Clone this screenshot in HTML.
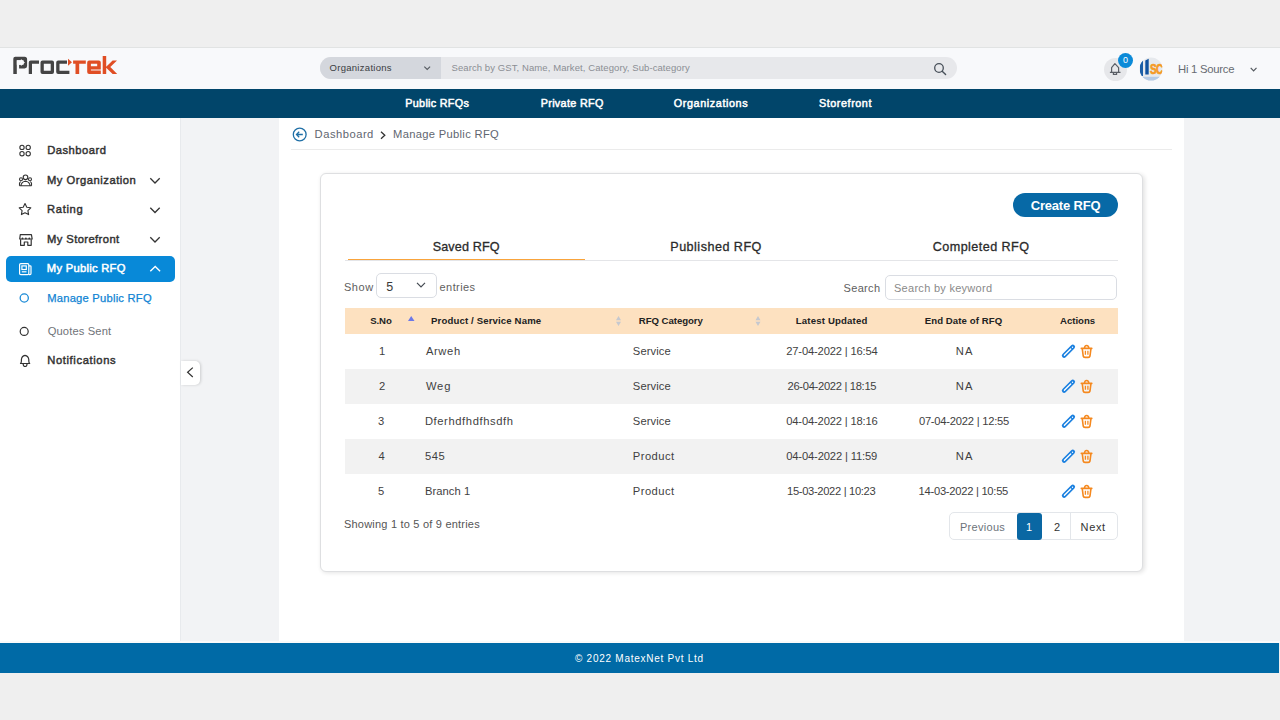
<!DOCTYPE html>
<html><head><meta charset="utf-8"><style>
html,body{margin:0;padding:0;width:1280px;height:720px;overflow:hidden;background:#efefef;position:relative}
.t{position:absolute;font-family:'Liberation Sans', sans-serif;line-height:40px;white-space:nowrap}
.a{position:absolute}
svg{position:absolute;overflow:visible}
</style></head><body>
<!-- top band / header -->
<div class="a" style="left:0;top:47px;width:1280px;height:1px;background:#e1e3e3"></div>
<div class="a" style="left:0;top:48px;width:1280px;height:41px;background:#f8f9fb"></div>
<!-- logo -->
<svg style="left:0;top:0" width="130" height="90" viewBox="0 0 130 90">
  <g fill="#444">
    <path d="M13.3 74 V58.7 Q13.3 56.7 15.3 56.7 H24.6 Q27.1 56.7 27.1 59.2 V66 Q27.1 68.4 24.6 68.4 H19.1 V64.7 H23.6 V60.2 H16.8 V74 Z"/>
    <path d="M16.8 60.3 H20.9 V58.9 L24.9 62.5 L20.9 66.1 V64.7 H19.1 L16.8 64.7 Z" fill="#f8f9fb"/>
    <path d="M28.75 74 V62.4 Q28.75 60.4 30.75 60.4 H39 V63.7 H32 V74 Z"/>
    <path d="M42.5 60.4 H52 Q54 60.4 54 62.4 V72 Q54 74 52 74 H42.5 Q40.5 74 40.5 72 V62.4 Q40.5 60.4 42.5 60.4 Z M43.8 63.7 V70.7 H50.7 V63.7 Z"/>
    <path d="M58.2 60.4 H67 V63.7 H59.5 V70.7 H69.4 V74 H58.2 Q56.2 74 56.2 72 V62.4 Q56.2 60.4 58.2 60.4 Z"/>
  </g>
  <g fill="#e04e24">
    <path d="M68 58.8 L72 62.3 L68 65.8 Z"/>
    <path d="M73.1 60.4 H85.8 V63.7 H79.2 V74 H75.5 V63.7 H73.1 Z"/>
    <path d="M89.2 60.4 H98.8 Q100.8 60.4 100.8 62.4 V69.6 H90.9 V70.6 H100.8 V74 H89.2 Q87.2 74 87.2 72 V62.4 Q87.2 60.4 89.2 60.4 Z M90.9 63.7 V66.2 H97.2 V63.7 Z"/>
    <path d="M102.7 56 H106.2 V66.8 L112.6 60.4 H117 L110.3 67 L117.2 74 H112.6 L106.2 67.8 V74 H102.7 Z"/>
  </g>
</svg>
<!-- search -->
<div class="a" style="left:320px;top:57px;width:637px;height:22px;border-radius:11px;background:#e7e8eb;overflow:hidden">
  <div class="a" style="left:0;top:0;width:120.5px;height:22px;background:#d4d7dd"></div>
</div>
<svg style="left:0;top:0" width="1" height="1">
  <path d="M424.3 66.6 L427.2 69.5 L430.1 66.6" fill="none" stroke="#555a60" stroke-width="1.1"/>
  <circle cx="939" cy="68" r="4.3" fill="none" stroke="#48505a" stroke-width="1.3"/>
  <path d="M942.2 71.2 L945.6 74.6" stroke="#48505a" stroke-width="1.4" stroke-linecap="round"/>
</svg>
<!-- bell / badge / avatar -->
<div class="a" style="left:1104px;top:57.5px;width:23px;height:23px;border-radius:50%;background:#e6e7ea"></div>
<svg style="left:0;top:0" width="1" height="1">
  <path d="M1109.9 72.4 H1120.5 M1111.6 72.4 V67.6 L1114.9 63.6 L1118.6 67.6 V72.4 M1113.4 72.6 V74.4 H1116.6 V72.6" fill="none" stroke="#5a5e66" stroke-width="1.2" stroke-linejoin="round"/>
</svg>
<div class="a" style="left:1118px;top:53px;width:15px;height:15px;border-radius:50%;background:#0b8ad8"></div>
<div class="a" style="left:1118px;top:53px;width:15px;height:15px;color:#fff;font-family:'Liberation Sans';font-size:9px;line-height:14px;text-align:center">0</div>
<svg style="left:0;top:0" width="1" height="1">
  <defs><clipPath id="av"><circle cx="1151" cy="69" r="11.5"/></clipPath></defs>
  <g clip-path="url(#av)">
    <rect x="1139" y="57" width="24" height="24" fill="#e6e9ed"/>
    <path d="M1140 62 L1143 60 L1143 76 L1140 76 Z" fill="#1b5fa8"/>
    <path d="M1145.3 60.5 L1148.7 58.8 L1148.7 74.5 L1145.3 74.5 Z" fill="#0f52a0"/>
    <text x="1150" y="73.8" style="font-family:'Liberation Sans';font-weight:bold;font-size:14px" fill="#f59a25" stroke="#f59a25" stroke-width="0.7" letter-spacing="-1" transform="translate(1150 73.8) scale(0.72 1.07) translate(-1150 -73.8)">SC</text>
    <rect x="1139" y="76.8" width="24" height="4.5" fill="#b5cbe6"/>
  </g>
</svg>
<svg style="left:0;top:0" width="1" height="1">
  <path d="M1250.7 67.8 L1253.6 70.8 L1256.5 67.8" fill="none" stroke="#555a60" stroke-width="1.2"/>
</svg>
<!-- nav -->
<div class="a" style="left:0;top:89px;width:1280px;height:29px;background:#01456a"></div>
<!-- columns -->
<div class="a" style="left:0;top:118px;width:180px;height:525px;background:#fff"></div>
<div class="a" style="left:180px;top:118px;width:99px;height:525px;background:#f2f3f5;border-left:1px solid #e8eaed;box-sizing:border-box"></div>
<div class="a" style="left:279px;top:118px;width:905px;height:525px;background:#fff"></div>
<div class="a" style="left:1184px;top:118px;width:96px;height:525px;background:#f2f3f5"></div>
<!-- sidebar active -->
<div class="a" style="left:6px;top:255.5px;width:169px;height:26.8px;border-radius:5px;background:#0889d8"></div>
<svg style="left:0;top:0" width="1" height="1" fill="none" stroke="#333" stroke-width="1.1">
  <!-- dashboard -->
  <circle cx="22" cy="147.4" r="2.15"/><circle cx="28.2" cy="147.4" r="2.15"/>
  <circle cx="22" cy="153.7" r="2.15"/><circle cx="28.2" cy="153.7" r="2.15"/>
  <!-- organization -->
  <circle cx="25.5" cy="177.3" r="2.3"/>
  <circle cx="21" cy="179.3" r="1.5"/><circle cx="30" cy="179.3" r="1.5"/>
  <path d="M19.5 185.8 H31.5 M20.8 185.8 Q21.5 181.5 25.5 181.2 Q29.5 181.5 30.2 185.8 M19.5 185.8 V183.2 Q19.6 182 21 181.7 M31.5 185.8 V183.2 Q31.4 182 30 181.7"/>
  <!-- star -->
  <path d="M25 203.6 L26.8 207.3 L30.8 207.8 L27.9 210.6 L28.6 214.6 L25 212.7 L21.4 214.6 L22.1 210.6 L19.2 207.8 L23.2 207.3 Z" stroke-linejoin="round"/>
  <!-- storefront -->
  <path d="M19.7 239 L20.3 234.6 H31.4 L32.2 239 Z" stroke-width="1.2" stroke-linejoin="round"/>
  <circle cx="22.5" cy="238.4" r="0.9" fill="#333" stroke="none"/><circle cx="25.9" cy="238.4" r="0.9" fill="#333" stroke="none"/><circle cx="29.3" cy="238.4" r="0.9" fill="#333" stroke="none"/>
  <path d="M20.6 239.2 V245.3 H24.3 V242 H27.8 V245.3 H31.2 V239.2" stroke-width="1.2" stroke-linejoin="round"/>
  <!-- chevrons -->
  <path d="M150.3 178.3 L155 183 L159.7 178.3" stroke-width="1.3"/>
  <path d="M150.3 207.8 L155 212.5 L159.7 207.8" stroke-width="1.3"/>
  <path d="M150.3 237.3 L155 242 L159.7 237.3" stroke-width="1.3"/>
  <!-- quotes sent circle -->
  <circle cx="24.2" cy="331.4" r="4" stroke-width="1.2"/>
  <!-- bell -->
  <path d="M20.5 363.5 Q21.4 362.9 21.4 361 V359.6 Q21.7 356 25 355.4 Q28.4 356 28.8 359.6 V361 Q28.8 362.9 29.7 363.5 Z" stroke-width="1.2" stroke-linejoin="round"/>
  <path d="M23.1 363.7 Q23.3 366.5 25.1 366.5 Q26.9 366.5 27.1 363.7" stroke-width="1.2"/>
</svg>
<svg style="left:0;top:0" width="1" height="1" fill="none" stroke="#fff" stroke-width="1.2">
  <rect x="19.6" y="263.6" width="9.2" height="11" rx="1.2"/>
  <path d="M28.8 265.8 H30.2 Q31 265.8 31 266.6 V273.6 Q31 274.6 30 274.6 H28.8"/>
  <rect x="21.9" y="265.9" width="4.4" height="3.6"/>
  <path d="M21.8 271.8 H26.5"/>
  <path d="M150.3 271.2 L155.2 266.5 L160.1 271.2" stroke-width="1.4"/>
</svg>
<svg style="left:0;top:0" width="1" height="1" fill="none" stroke="#1a8ad6" stroke-width="1.3">
  <circle cx="24.25" cy="298" r="4.1"/>
</svg>
<!-- collapse btn -->
<div class="a" style="left:181px;top:360.5px;width:19px;height:24.8px;background:#fff;border-radius:0 5px 5px 0;box-shadow:1px 0 3px rgba(0,0,0,.16)"></div>
<svg style="left:0;top:0" width="1" height="1"><path d="M192.8 367.6 L187.6 372.3 L192.8 377" fill="none" stroke="#333" stroke-width="1.2"/></svg>
<!-- breadcrumb -->
<svg style="left:0;top:0" width="1" height="1" fill="none" stroke="#1f6fa6" stroke-width="1.3">
  <circle cx="299.7" cy="134.5" r="6.4"/>
  <path d="M302.8 134.5 H296.5 M299.2 131.8 L296.5 134.5 L299.2 137.2"/>
</svg>
<svg style="left:0;top:0" width="1" height="1"><path d="M381 131.8 L384.8 135.3 L381 138.8" fill="none" stroke="#333" stroke-width="1.3"/></svg>
<div class="a" style="left:291px;top:149px;width:881px;height:1px;background:#ebebeb"></div>
<!-- card -->
<div class="a" style="left:319.5px;top:172.5px;width:823px;height:399.8px;background:#fff;border-radius:6px;border:1px solid #dedfe1;box-sizing:border-box;box-shadow:1.5px 1px 4px rgba(0,0,0,.11)"></div>
<div class="a" style="left:1012.5px;top:193px;width:105.5px;height:23.5px;border-radius:12px;background:#0769a6"></div>
<!-- tabs -->
<div class="a" style="left:345px;top:259.5px;width:773px;height:1.3px;background:#e4e5e8"></div>
<div class="a" style="left:348px;top:258.6px;width:237.3px;height:1.8px;background:#f9a43c"></div>
<!-- select + search -->
<div class="a" style="left:376.2px;top:273px;width:60.5px;height:24.5px;border:1px solid #dadde3;border-radius:5px;box-sizing:border-box"></div>
<svg style="left:0;top:0" width="1" height="1"><path d="M417 282.8 L421 286.8 L425 282.8" fill="none" stroke="#444a52" stroke-width="1.2"/></svg>
<div class="a" style="left:885px;top:275.3px;width:232px;height:24.5px;border:1px solid #dadde3;border-radius:5px;box-sizing:border-box"></div>
<!-- table header -->
<div class="a" style="left:345px;top:307.5px;width:773px;height:26.5px;background:#fde1c0"></div>
<svg style="left:0;top:0" width="1" height="1">
  <path d="M408 321 L411.2 316 L414.5 321 Z" fill="#6c78e8"/>
  <path d="M616 320.2 L618.5 316 L621 320.2 Z M616 321.8 L618.5 326 L621 321.8 Z" fill="#c5c8cf"/>
  <path d="M755.5 320.2 L758 316 L760.5 320.2 Z M755.5 321.8 L758 326 L760.5 321.8 Z" fill="#c5c8cf"/>
</svg>
<!-- striped rows -->
<div class="a" style="left:345px;top:369px;width:773px;height:35px;background:#f2f2f2"></div>
<div class="a" style="left:345px;top:439px;width:773px;height:35px;background:#f2f2f2"></div>
<!-- action icons -->
<svg style="left:0;top:0" width="1" height="1">
  <defs>
    <g id="acts">
      <path d="M1064.1 355.6 L1072.8 346.9" stroke="#1a80e0" stroke-width="4.5" stroke-linecap="round"/>
      <path d="M1064.4 355.3 L1070.7 349" stroke="#fff" stroke-width="1.3" stroke-linecap="round"/>
      <circle cx="1072.5" cy="347.3" r="0.7" fill="#fff"/>
      <path d="M1081.3 348.4 H1091.8" stroke="#f5891f" stroke-width="1.6" stroke-linecap="round"/>
      <path d="M1084.5 348.4 Q1084.5 345.5 1086.6 345.5 Q1088.8 345.5 1088.8 348.4" fill="none" stroke="#f5891f" stroke-width="1.5"/>
      <path d="M1082.3 348.8 L1083.2 356 Q1083.5 357.4 1085 357.4 H1088.2 Q1089.7 357.4 1090 356 L1090.9 348.8" fill="none" stroke="#f5891f" stroke-width="1.6" stroke-linejoin="round"/>
      <path d="M1085.4 350.8 V354.8 M1087.9 350.8 V354.8" stroke="#f5891f" stroke-width="1.3"/>
    </g>
  </defs>
  <use href="#acts"/>
  <use href="#acts" y="35"/>
  <use href="#acts" y="70"/>
  <use href="#acts" y="105"/>
  <use href="#acts" y="140"/>
</svg>
<!-- pagination -->
<div class="a" style="left:949.4px;top:512.2px;width:168.5px;height:28.2px;border:1px solid #e3e6ea;border-radius:5px;box-sizing:border-box"></div>
<div class="a" style="left:1069.5px;top:513px;width:1px;height:27px;background:#e3e6ea"></div>
<div class="a" style="left:1017px;top:513px;width:25px;height:26.7px;border-radius:3px;background:#0a67a3"></div>
<!-- footer -->
<div class="a" style="left:0;top:641px;width:1280px;height:2px;background:#fafafa"></div>
<div class="a" style="left:0;top:643px;width:1279px;height:30px;background:#006aa6"></div>

<div class="t" style="left:329.50px;top:48.00px;font-size:9.5px;font-weight:400;color:#3a3d42;letter-spacing:0.292px;">Organizations</div><div class="t" style="left:451.50px;top:48.00px;font-size:9.5px;font-weight:400;color:#8b8e94;letter-spacing:0.090px;">Search by GST, Name, Market, Category, Sub-category</div><div class="t" style="left:1178.00px;top:49.00px;font-size:11.3px;font-weight:400;color:#676b72;letter-spacing:-0.250px;">Hi 1 Source</div><div class="t" style="left:405.30px;top:83.20px;font-size:10.8px;font-weight:400;color:#fff;letter-spacing:0.290px;-webkit-text-stroke:0.5px #fff">Public RFQs</div><div class="t" style="left:540.70px;top:83.20px;font-size:10.8px;font-weight:400;color:#fff;letter-spacing:0.330px;-webkit-text-stroke:0.5px #fff">Private RFQ</div><div class="t" style="left:673.75px;top:83.20px;font-size:10.8px;font-weight:400;color:#fff;letter-spacing:0.604px;-webkit-text-stroke:0.5px #fff">Organizations</div><div class="t" style="left:819.00px;top:83.20px;font-size:10.8px;font-weight:400;color:#fff;letter-spacing:0.556px;-webkit-text-stroke:0.5px #fff">Storefront</div><div class="t" style="left:47.20px;top:130.30px;font-size:11.2px;font-weight:400;color:#333;letter-spacing:0.500px;-webkit-text-stroke:0.45px #333">Dashboard</div><div class="t" style="left:47.00px;top:159.90px;font-size:11.2px;font-weight:400;color:#333;letter-spacing:0.521px;-webkit-text-stroke:0.45px #333">My Organization</div><div class="t" style="left:47.00px;top:189.30px;font-size:11.2px;font-weight:400;color:#333;letter-spacing:0.680px;-webkit-text-stroke:0.45px #333">Rating</div><div class="t" style="left:47.00px;top:218.80px;font-size:11.2px;font-weight:400;color:#333;letter-spacing:0.417px;-webkit-text-stroke:0.45px #333">My Storefront</div><div class="t" style="left:46.80px;top:248.10px;font-size:11.2px;font-weight:400;color:#fff;letter-spacing:0.283px;-webkit-text-stroke:0.5px #fff">My Public RFQ</div><div class="t" style="left:47.20px;top:278.00px;font-size:11.2px;font-weight:400;color:#0f84d4;letter-spacing:0.231px;-webkit-text-stroke:0.25px #0f84d4">Manage Public RFQ</div><div class="t" style="left:47.70px;top:311.20px;font-size:11.2px;font-weight:400;color:#6f7378;letter-spacing:0.130px;">Quotes Sent</div><div class="t" style="left:47.20px;top:340.00px;font-size:11.2px;font-weight:400;color:#333;letter-spacing:0.625px;-webkit-text-stroke:0.45px #333">Notifications</div><div class="t" style="left:314.60px;top:114.30px;font-size:11.2px;font-weight:400;color:#5f6670;letter-spacing:0.500px;">Dashboard</div><div class="t" style="left:393.00px;top:114.30px;font-size:11.2px;font-weight:400;color:#5f6670;letter-spacing:0.312px;">Manage Public RFQ</div><div class="t" style="left:1030.70px;top:185.50px;font-size:13px;font-weight:700;color:#fff;letter-spacing:-0.189px;">Create RFQ</div><div class="t" style="left:432.70px;top:227.40px;font-size:12.6px;font-weight:400;color:#2b2b2b;letter-spacing:0.138px;-webkit-text-stroke:0.3px #2b2b2b">Saved RFQ</div><div class="t" style="left:670.25px;top:227.40px;font-size:12.6px;font-weight:400;color:#2b2b2b;letter-spacing:0.479px;-webkit-text-stroke:0.3px #2b2b2b">Published RFQ</div><div class="t" style="left:932.80px;top:227.40px;font-size:12.6px;font-weight:400;color:#2b2b2b;letter-spacing:0.433px;-webkit-text-stroke:0.3px #2b2b2b">Completed RFQ</div><div class="t" style="left:343.90px;top:266.50px;font-size:11px;font-weight:400;color:#606060;letter-spacing:0.633px;">Show</div><div class="t" style="left:386.20px;top:266.50px;font-size:12.5px;font-weight:400;color:#3a3a3a;letter-spacing:0.000px;">5</div><div class="t" style="left:439.60px;top:266.50px;font-size:11px;font-weight:400;color:#606060;letter-spacing:0.400px;">entries</div><div class="t" style="left:843.50px;top:267.80px;font-size:11px;font-weight:400;color:#606060;letter-spacing:0.340px;">Search</div><div class="t" style="left:894.00px;top:267.80px;font-size:11px;font-weight:400;color:#8a8a8a;letter-spacing:0.281px;">Search by keyword</div><div class="t" style="left:370.20px;top:300.90px;font-size:9.6px;font-weight:700;color:#222;letter-spacing:-0.067px;">S.No</div><div class="t" style="left:431.00px;top:300.90px;font-size:9.6px;font-weight:700;color:#222;letter-spacing:0.143px;">Product / Service Name</div><div class="t" style="left:638.80px;top:300.90px;font-size:9.6px;font-weight:700;color:#222;letter-spacing:-0.036px;">RFQ Category</div><div class="t" style="left:795.80px;top:300.90px;font-size:9.6px;font-weight:700;color:#222;letter-spacing:0.169px;">Latest Updated</div><div class="t" style="left:924.70px;top:300.90px;font-size:9.6px;font-weight:700;color:#222;letter-spacing:0.093px;">End Date of RFQ</div><div class="t" style="left:1060.00px;top:300.90px;font-size:9.6px;font-weight:700;color:#222;letter-spacing:0.000px;">Actions</div><div class="t" style="left:379.00px;top:331.30px;font-size:11.2px;font-weight:400;color:#3f3f3f;letter-spacing:0.000px;">1</div><div class="t" style="left:425.90px;top:331.30px;font-size:11.2px;font-weight:400;color:#3f3f3f;letter-spacing:0.625px;">Arweh</div><div class="t" style="left:632.80px;top:331.30px;font-size:11.2px;font-weight:400;color:#3f3f3f;letter-spacing:0.117px;">Service</div><div class="t" style="left:786.20px;top:331.30px;font-size:11.2px;font-weight:400;color:#3f3f3f;letter-spacing:-0.159px;">27-04-2022 | 16:54</div><div class="t" style="left:955.70px;top:331.30px;font-size:11.2px;font-weight:400;color:#3f3f3f;letter-spacing:1.300px;">NA</div><div class="t" style="left:379.00px;top:366.30px;font-size:11.2px;font-weight:400;color:#3f3f3f;letter-spacing:0.000px;">2</div><div class="t" style="left:425.90px;top:366.30px;font-size:11.2px;font-weight:400;color:#3f3f3f;letter-spacing:0.850px;">Weg</div><div class="t" style="left:632.80px;top:366.30px;font-size:11.2px;font-weight:400;color:#3f3f3f;letter-spacing:0.117px;">Service</div><div class="t" style="left:787.50px;top:366.30px;font-size:11.2px;font-weight:400;color:#3f3f3f;letter-spacing:-0.312px;">26-04-2022 | 18:15</div><div class="t" style="left:955.70px;top:366.30px;font-size:11.2px;font-weight:400;color:#3f3f3f;letter-spacing:1.300px;">NA</div><div class="t" style="left:378.00px;top:401.30px;font-size:11.2px;font-weight:400;color:#3f3f3f;letter-spacing:0.000px;">3</div><div class="t" style="left:424.90px;top:401.30px;font-size:11.2px;font-weight:400;color:#3f3f3f;letter-spacing:0.607px;">Dferhdfhdfhsdfh</div><div class="t" style="left:632.80px;top:401.30px;font-size:11.2px;font-weight:400;color:#3f3f3f;letter-spacing:0.117px;">Service</div><div class="t" style="left:786.20px;top:401.30px;font-size:11.2px;font-weight:400;color:#3f3f3f;letter-spacing:-0.159px;">04-04-2022 | 18:16</div><div class="t" style="left:918.90px;top:401.30px;font-size:11.2px;font-weight:400;color:#3f3f3f;letter-spacing:-0.235px;">07-04-2022 | 12:55</div><div class="t" style="left:378.40px;top:436.30px;font-size:11.2px;font-weight:400;color:#3f3f3f;letter-spacing:0.000px;">4</div><div class="t" style="left:424.90px;top:436.30px;font-size:11.2px;font-weight:400;color:#3f3f3f;letter-spacing:0.550px;">545</div><div class="t" style="left:632.80px;top:436.30px;font-size:11.2px;font-weight:400;color:#3f3f3f;letter-spacing:0.467px;">Product</div><div class="t" style="left:786.20px;top:436.30px;font-size:11.2px;font-weight:400;color:#3f3f3f;letter-spacing:-0.141px;">04-04-2022 | 11:59</div><div class="t" style="left:955.70px;top:436.30px;font-size:11.2px;font-weight:400;color:#3f3f3f;letter-spacing:1.300px;">NA</div><div class="t" style="left:378.00px;top:471.30px;font-size:11.2px;font-weight:400;color:#3f3f3f;letter-spacing:0.000px;">5</div><div class="t" style="left:424.90px;top:471.30px;font-size:11.2px;font-weight:400;color:#3f3f3f;letter-spacing:0.071px;">Branch 1</div><div class="t" style="left:632.80px;top:471.30px;font-size:11.2px;font-weight:400;color:#3f3f3f;letter-spacing:0.467px;">Product</div><div class="t" style="left:787.00px;top:471.30px;font-size:11.2px;font-weight:400;color:#3f3f3f;letter-spacing:-0.335px;">15-03-2022 | 10:23</div><div class="t" style="left:918.60px;top:471.30px;font-size:11.2px;font-weight:400;color:#3f3f3f;letter-spacing:-0.271px;">14-03-2022 | 10:55</div><div class="t" style="left:344.00px;top:504.40px;font-size:11px;font-weight:400;color:#555;letter-spacing:0.208px;">Showing 1 to 5 of 9 entries</div><div class="t" style="left:960.00px;top:506.70px;font-size:11px;font-weight:400;color:#6c737a;letter-spacing:0.286px;">Previous</div><div class="t" style="left:1026.00px;top:506.70px;font-size:11px;font-weight:400;color:#fff;letter-spacing:0.000px;">1</div><div class="t" style="left:1054.00px;top:506.70px;font-size:11px;font-weight:400;color:#333;letter-spacing:0.000px;">2</div><div class="t" style="left:1080.60px;top:506.70px;font-size:11px;font-weight:400;color:#333;letter-spacing:0.633px;">Next</div><div class="t" style="left:575.00px;top:638.90px;font-size:10px;font-weight:400;color:#fff;letter-spacing:0.739px;">© 2022 MatexNet Pvt Ltd</div>
</body></html>
